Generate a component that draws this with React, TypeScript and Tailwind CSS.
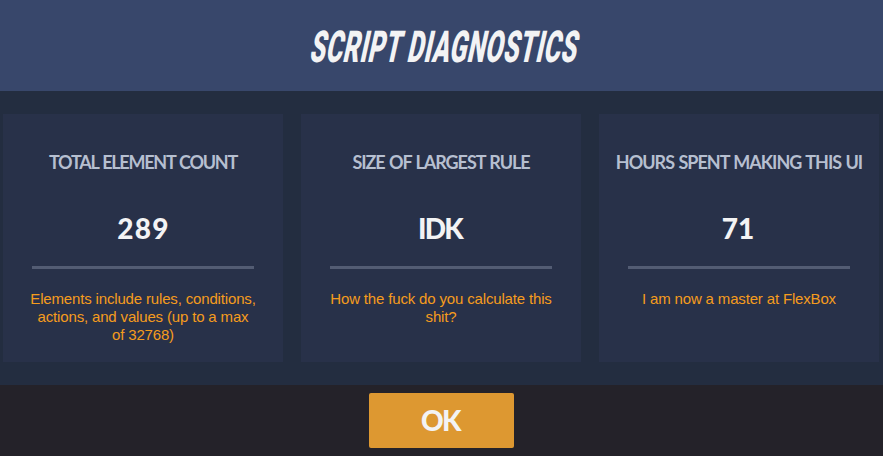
type Card = { title: string; value: string; note: string; titleClass: string; valueClass: string };

const cards: Card[] = [
  {
    title: 'TOTAL ELEMENT COUNT',
    value: '289',
    note: 'Elements include rules, conditions, actions, and values (up to a max of 32768)',
    titleClass: 'tracking-[-1.25px] [word-spacing:1px]',
    valueClass: 'tracking-[1.2px] pl-px',
  },
  {
    title: 'SIZE OF LARGEST RULE',
    value: 'IDK',
    note: 'How the fuck do you calculate this shit?',
    titleClass: 'tracking-[-1.05px] [word-spacing:1px]',
    valueClass: 'tracking-[-1.8px] pr-[2px]',
  },
  {
    title: 'HOURS SPENT MAKING THIS UI',
    value: '71',
    note: 'I am now a master at FlexBox',
    titleClass: 'tracking-[-1px] [word-spacing:1px]',
    valueClass: 'pr-[2px]',
  },
];

export default function App() {
  return (
    <div className="flex h-[456px] w-[883px] flex-col overflow-hidden bg-[#242229]">
      <header className="flex h-[91px] shrink-0 items-center justify-center bg-[#38476b] pt-[3px] pl-[7px]">
        <h1 className="origin-center scale-x-[0.57] -skew-x-[21deg] whitespace-nowrap font-['Roboto','Liberation_Sans',sans-serif] text-[44px] leading-[53px] font-black tracking-[0.9px] text-[#f3f3f4]">
          SCRIPT DIAGNOSTICS
        </h1>
      </header>
      <main className="flex h-[294px] shrink-0 gap-[18px] bg-[#232d40] pt-[23px] pl-[3px]">
        {cards.map((card) => (
          <section key={card.title} className="flex h-[248px] w-[280px] shrink-0 flex-col items-center bg-[#283149] pt-9 text-center">
            <h2 className={`h-6 font-['Lato',sans-serif] text-[18px] leading-6 font-bold whitespace-nowrap text-[#b6bfd0] ${card.titleClass}`}>
              {card.title}
            </h2>
            <p className={`mt-9 h-9 font-['Lato',sans-serif] text-[28px] leading-9 font-black text-[#f3f3f4] ${card.valueClass}`}>
              {card.value}
            </p>
            <div className="mt-5 h-[3px] w-[222px] bg-[#535c73]" />
            <p className="mt-[21px] w-[226px] font-['Liberation_Sans',Arial,sans-serif] text-[15px] leading-[18px] tracking-[-0.16px] text-[#f59c1d]">
              {card.note}
            </p>
          </section>
        ))}
      </main>
      <footer className="flex h-[71px] justify-center pt-2">
        <button className="h-[55px] w-[145px] rounded-[2px] bg-[#dd9831] pr-[2px] font-['Lato',sans-serif] text-[28px] leading-[55px] font-black tracking-[-1.5px] text-[#f3f3f4]">
          OK
        </button>
      </footer>
    </div>
  );
}
